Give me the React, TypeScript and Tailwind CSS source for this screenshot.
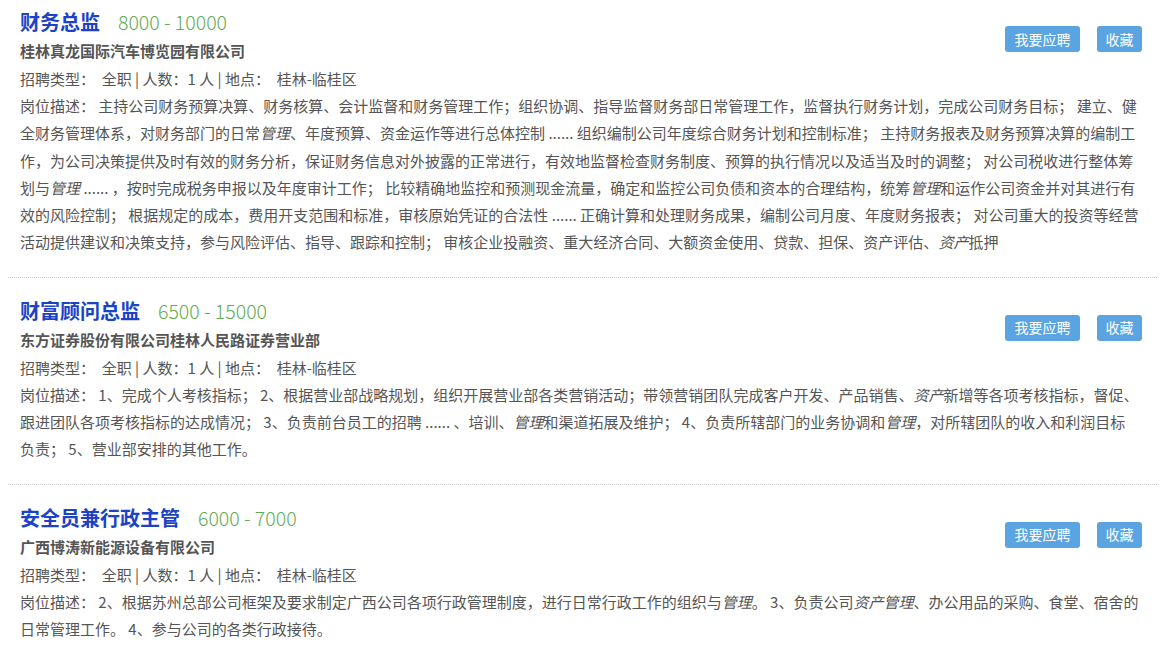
import React from "react";

type Seg = string | { em: string } | { br: true };

interface Job {
  title: string;
  salary: string;
  company: string;
  desc: Seg[];
}

const jobs: Job[] = [
  {
    title: "财务总监",
    salary: "8000 - 10000",
    company: "桂林真龙国际汽车博览园有限公司",
    desc: [
      "岗位描述： 主持公司财务预算决算、财务核算、会计监督和财务管理工作；组织协调、指导监督财务部日常管理工作，监督执行财务计划，完成公司财务目标； 建立、健全财务管理体系，对财务部门的日常",
      { em: "管理" },
      "、年度预算、资金运作等进行总体控制 ...... 组织编制公司年度综合财务计划和控制标准； 主持财务报表及财务预算决算的编制工作，为公司决策提供及时有效的财务分析，保证财务信息对外披露的正常进行，有效地监督检查财务制度、预算的执行情况以及适当及时的调整； 对公司税收进行整体筹划与",
      { em: "管理" },
      " ...... ，按时完成税务申报以及年度审计工作； 比较精确地监控和预测现金流量，确定和监控公司负债和资本的合理结构，统筹",
      { em: "管理" },
      "和运作公司资金并对其进行有效的风险控制； 根据规定的成本，费用开支范围和标准，审核原始凭证的合法性 ...... 正确计算和处理财务成果，编制公司月度、年度财务报表； 对公司重大的投资等经营活动提供建议和决策支持，参与风险评估、指导、跟踪和控制； 审核企业投融资、重大经济合同、大额资金使用、贷款、担保、资产评估、",
      { em: "资产" },
      "抵押",
    ],
  },
  {
    title: "财富顾问总监",
    salary: "6500 - 15000",
    company: "东方证券股份有限公司桂林人民路证券营业部",
    desc: [
      "岗位描述： 1、完成个人考核指标； 2、根据营业部战略规划，组织开展营业部各类营销活动；带领营销团队完成客户开发、产品销售、",
      { em: "资产" },
      "新增等各项考核指标，督促、跟进团队各项考核指标的达成情况； 3、负责前台员工的招聘 ...... 、培训、",
      { em: "管理" },
      "和渠道拓展及维护； 4、负责所辖部门的业务协调和",
      { em: "管理" },
      "，对所辖团队的收入和利润目标",
      { br: true },
      "负责； 5、营业部安排的其他工作。",
    ],
  },
  {
    title: "安全员兼行政主管",
    salary: "6000 - 7000",
    company: "广西博涛新能源设备有限公司",
    desc: [
      "岗位描述： 2、根据苏州总部公司框架及要求制定广西公司各项行政管理制度，进行日常行政工作的组织与",
      { em: "管理" },
      "。 3、负责公司",
      { em: "资产管理" },
      "、办公用品的采购、食堂、宿舍的日常管理工作。 4、参与公司的各类行政接待。",
    ],
  },
];

function JobItem({ job, first }: { job: Job; first: boolean }) {
  return (
    <div
      className={
        "mx-2 border-b border-dotted border-[#c8c8c8] px-3 pb-[21px] " +
        (first ? "pt-[7px]" : "pt-[18px]")
      }
    >
      <div className="flex items-start justify-between">
        <div>
          <div className="flex h-[30px] items-center">
            <span className="text-[20px] font-bold text-[#1c43c6]">{job.title}</span>
            <span className="ml-[18px] text-[19.5px] font-light text-[#62ab55]">{job.salary}</span>
          </div>
          <div className="text-[15px] font-bold leading-[28px] text-[#555]">{job.company}</div>
        </div>
        <div className="mr-[3px] mt-[19px] flex gap-[17px]">
          <button className="h-[26px] w-[75px] rounded-[3px] bg-[#5ba4e2] text-[14px] text-white">
            我要应聘
          </button>
          <button className="h-[26px] w-[45px] rounded-[3px] bg-[#5ba4e2] text-[14px] text-white">
            收藏
          </button>
        </div>
      </div>
      <div className="text-[15px] leading-[27px] text-[#555]">
        招聘类型：&nbsp; 全职 | 人数：1 人 | 地点：&nbsp; 桂林-临桂区
      </div>
      <div className="pr-[3px] text-[15px] leading-[27.3px] text-[#555]">
        {job.desc.map((s, i) => {
          if (typeof s === "string") return <React.Fragment key={i}>{s}</React.Fragment>;
          if ("br" in s) return <br key={i} />;
          return (
            <em key={i} className="italic">
              {s.em}
            </em>
          );
        })}
      </div>
    </div>
  );
}

export default function App() {
  return (
    <div className="h-[645px] w-full overflow-hidden bg-white font-['Noto_Sans_CJK_SC','Microsoft_YaHei',sans-serif]">
      {jobs.map((j, i) => (
        <JobItem key={i} job={j} first={i === 0} />
      ))}
    </div>
  );
}
